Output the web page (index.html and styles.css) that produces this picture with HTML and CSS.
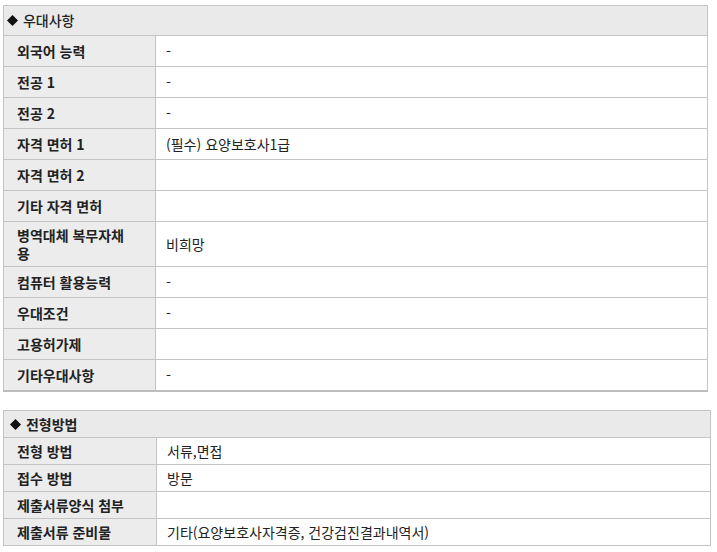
FILE: index.html
```html
<!DOCTYPE html>
<html lang="ko">
<head>
<meta charset="utf-8">
<link rel="stylesheet" href="styles.css">
</head>
<body>
<table class="info info-first">
  <colgroup><col class="c-label"><col></colgroup>
  <thead>
    <tr><th colspan="2" class="head head-light"><svg class="dia" width="11" height="11" viewBox="0 0 11 11"><path d="M5.5 0 L11 5.5 L5.5 11 L0 5.5 Z" fill="#111"/></svg> 우대사항</th></tr>
  </thead>
  <tbody>
    <tr><th class="label">외국어 능력</th><td class="val">-</td></tr>
    <tr><th class="label">전공 1</th><td class="val">-</td></tr>
    <tr><th class="label">전공 2</th><td class="val">-</td></tr>
    <tr><th class="label">자격 면허 1</th><td class="val">(필수) 요양보호사1급</td></tr>
    <tr><th class="label">자격 면허 2</th><td class="val"></td></tr>
    <tr><th class="label">기타 자격 면허</th><td class="val"></td></tr>
    <tr class="tall"><th class="label">병역대체 복무자채용</th><td class="val">비희망</td></tr>
    <tr><th class="label">컴퓨터 활용능력</th><td class="val">-</td></tr>
    <tr><th class="label">우대조건</th><td class="val">-</td></tr>
    <tr><th class="label">고용허가제</th><td class="val"></td></tr>
    <tr><th class="label">기타우대사항</th><td class="val">-</td></tr>
  </tbody>
</table>

<table class="info info-second">
  <colgroup><col class="c-label2"><col></colgroup>
  <thead>
    <tr><th colspan="2" class="head"><svg class="dia" width="11" height="11" viewBox="0 0 11 11"><path d="M5.5 0 L11 5.5 L5.5 11 L0 5.5 Z" fill="#111"/></svg> 전형방법</th></tr>
  </thead>
  <tbody>
    <tr><th class="label">전형 방법</th><td class="val">서류,면접</td></tr>
    <tr><th class="label">접수 방법</th><td class="val">방문</td></tr>
    <tr><th class="label">제출서류양식 첨부</th><td class="val"></td></tr>
    <tr><th class="label">제출서류 준비물</th><td class="val">기타(요양보호사자격증, 건강검진결과내역서)</td></tr>
  </tbody>
</table>
</body>
</html>
```
FILE: styles.css
```css
html, body {
  margin: 0;
  padding: 0;
  background: #ffffff;
}
body {
  padding: 5px 3px;
  font-family: "Noto Sans CJK KR", "Noto Sans", sans-serif;
  font-size: 14px;
  color: #222222;
}
.info {
  border-collapse: collapse;
  table-layout: fixed;
  border: 1px solid #c4c4c4;
}
.info-first {
  width: 705px;
  border-bottom: 2px solid #bdbdbd;
}
.info-second {
  width: 708px;
  margin-top: 18px;
}
.c-label { width: 152px; }
.c-label2 { width: 153px; }
.info th, .info td {
  border: 1px solid #c4c4c4;
  line-height: 18px;
  height: 18px;
  text-align: left;
  vertical-align: middle;
}
.info-first th, .info-first td {
  padding: 6px 10px;
}
.info-second th, .info-second td {
  padding: 4px 10px;
}
.head {
  background: #eaeaea;
  font-weight: bold;
}
.info-first .head {
  padding: 5px 3px 6px;
}
.info-second .head {
  padding-left: 6px;
}
.head-light {
  font-weight: 500;
}
.dia {
  display: inline-block;
  vertical-align: 0;
  margin-right: 1px;
}
.info .label {
  background: #ececec;
  font-weight: bold;
  padding-left: 13px;
  padding-right: 25px;
}
.info .val {
  background: #ffffff;
  padding-left: 10px;
  font-weight: normal;
}
.info-first .tall th, .info-first .tall td {
  padding-top: 4px;
  padding-bottom: 4px;
}
```
